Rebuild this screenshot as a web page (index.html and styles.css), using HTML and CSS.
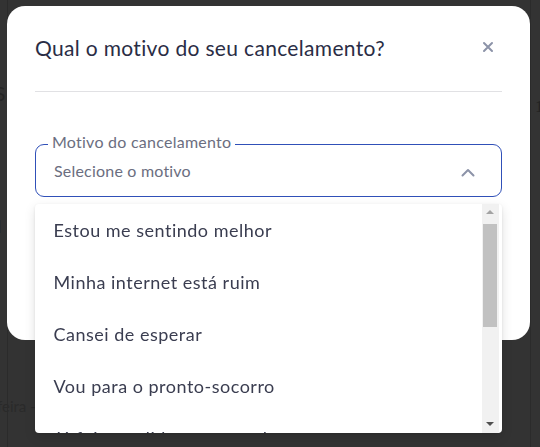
FILE: index.html
```html
<!DOCTYPE html>
<html lang="pt-BR">
<head>
<meta charset="utf-8">
<title>Cancelamento</title>
<link rel="stylesheet" href="styles.css">
</head>
<body>
<div class="page">
  <div class="bg-left">
    <span class="bg-s">S</span>
    <span class="bg-d">d</span>
    <span class="bg-feira">feira -</span>
  </div>
  <div class="bg-right"><span class="bg-one">1</span></div>
</div>
<div class="overlay">
  <div class="modal">
    <div class="modal-header">
      <h2 class="modal-title">Qual o motivo do seu cancelamento?</h2>
      <button class="close" aria-label="Fechar">
        <svg width="12" height="12" viewBox="0 0 12 12"><path d="M2 2 L10 10 M10 2 L2 10" stroke="#8c93a8" stroke-width="2" stroke-linecap="round"/></svg>
      </button>
    </div>
    <div class="divider"></div>
    <div class="field">
      <span class="field-label">Motivo do cancelamento</span>
      <span class="field-value">Selecione o motivo</span>
      <svg class="chevron" width="14" height="9" viewBox="0 0 14 9"><path d="M1.5 7.5 L7 2 L12.5 7.5" fill="none" stroke="#8c93a8" stroke-width="2" stroke-linecap="round" stroke-linejoin="round"/></svg>
      <div class="menu">
        <ul class="options">
          <li>Estou me sentindo melhor</li>
          <li>Minha internet está ruim</li>
          <li>Cansei de esperar</li>
          <li>Vou para o pronto-socorro</li>
          <li>Já fui atendido em outro lugar</li>
        </ul>
        <div class="scrollbar">
          <div class="arrow up"></div>
          <div class="track"><div class="thumb"></div></div>
          <div class="arrow down"></div>
        </div>
      </div>
    </div>
  </div>
</div>
</body>
</html>
```
FILE: styles.css
```css
html, body {
  margin: 0;
  padding: 0;
}
body {
  width: 540px;
  height: 447px;
  overflow: hidden;
  background: #333333;
  font-family: "Lato", "Noto Sans", sans-serif;
}
.page {
  display: flex;
  justify-content: space-between;
  height: 447px;
}
.bg-left {
  width: 7px;
  position: relative;
  border-right: 1px solid #2b2b2b;
}
.bg-right {
  width: 9px;
  position: relative;
  border-left: 1px solid #2b2b2b;
}
.bg-s, .bg-d, .bg-feira, .bg-one {
  position: absolute;
  color: #262626;
  font-size: 17px;
}
.bg-s { left: -5px; top: 82px; font-size: 19px; }
.bg-d { left: -8px; top: 216px; }
.bg-feira { left: -3px; top: 397px; font-size: 15px; color: #2a2a2a; white-space: nowrap; }
.bg-one { left: 4px; top: 97px; font-family: "Liberation Serif", serif; color: #222; }

.overlay {
  position: fixed;
  inset: 0;
  padding: 6px 0 0 7px;
}
.modal {
  width: 523px;
  height: 334px;
  box-sizing: border-box;
  background: #ffffff;
  border-radius: 18px;
  padding: 24px 28px 0 28px;
}
.modal-header {
  display: flex;
  align-items: center;
  justify-content: space-between;
  height: 34px;
}
.modal-title {
  margin: 0;
  font-size: 21px;
  letter-spacing: 0.33px;
  font-weight: 400;
  color: #2a2d45;
}
.close {
  border: 0;
  background: none;
  padding: 0;
  margin-right: 8px;
  width: 12px;
  height: 12px;
  display: flex;
}
.divider {
  margin-top: 27px;
  height: 1px;
  background: #e1e1e4;
}
.field {
  position: relative;
  margin-top: 52px;
  height: 53px;
  box-sizing: border-box;
  border: 1.5px solid #3050b8;
  border-radius: 9px;
  display: flex;
  align-items: center;
  justify-content: space-between;
  padding: 0 26px 0 18px;
}
.field-label {
  position: absolute;
  left: 12px;
  top: -13px;
  padding: 0 4px;
  background: #ffffff;
  font-size: 16px;
  letter-spacing: 0.25px;
  line-height: 20px;
  color: #6b6e80;
}
.field-value {
  font-size: 16px;
  letter-spacing: 0.2px;
  color: #6b6e80;
}
.chevron {
  margin-top: 3px;
}
.menu {
  position: absolute;
  left: -1.5px;
  top: 58.5px;
  width: 467px;
  height: 229px;
  background: #ffffff;
  border-radius: 4px;
  box-shadow: 0 4px 12px rgba(0, 0, 0, 0.12), 0 1px 3px rgba(0, 0, 0, 0.08);
  display: flex;
  overflow: hidden;
}
.options {
  list-style: none;
  margin: 0;
  padding: 0;
  flex: 1;
}
.options li {
  height: 52px;
  display: flex;
  align-items: center;
  padding-left: 19px;
  font-size: 18px;
  letter-spacing: 0.5px;
  color: #3a3d50;
}
.scrollbar {
  width: 17px;
  margin-right: 3px;
  background: #f1f1f1;
  display: flex;
  flex-direction: column;
}
.arrow {
  height: 17px;
  display: flex;
  align-items: center;
  justify-content: center;
}
.arrow::before {
  content: "";
  width: 0;
  height: 0;
  border-left: 4px solid transparent;
  border-right: 4px solid transparent;
}
.arrow.up::before { border-bottom: 4px solid #a3a3a3; }
.arrow.down::before { border-top: 4px solid #505050; }
.track {
  flex: 1;
  padding: 3px 2px 0 1px;
}
.thumb {
  height: 103px;
  background: #c1c1c1;
}
```
